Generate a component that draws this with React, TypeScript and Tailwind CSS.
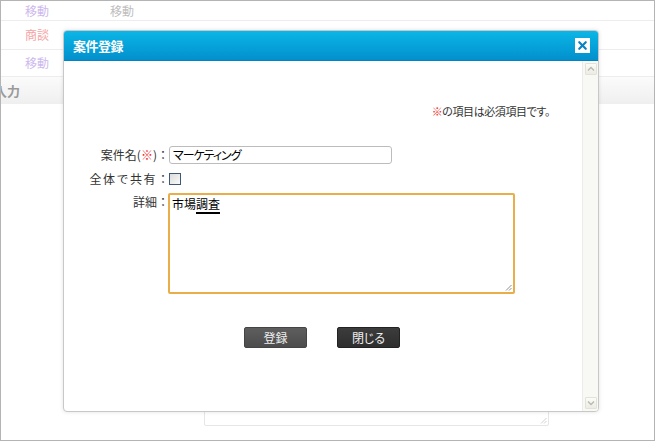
import { X } from 'lucide-react';

const jp = "font-['Noto_Sans_CJK_JP','Noto_Sans',sans-serif]";

function ScrollArrow({ up }: { up?: boolean }) {
  return (
    <div className="flex h-[12px] w-[12px] items-center justify-center rounded-[1px] border border-[#e2e2d8] bg-gradient-to-b from-[#fbfbf8] to-[#ecece4]">
      <svg width="8" height="6" viewBox="0 0 8 6">
        <path
          d={up ? 'M1 4.5 L4 1.5 L7 4.5' : 'M1 1.5 L4 4.5 L7 1.5'}
          fill="none"
          stroke="#b8b8b0"
          strokeWidth="1.3"
        />
      </svg>
    </div>
  );
}

function Grip({ color = '#a0a0a0' }: { color?: string }) {
  return (
    <svg className="absolute bottom-[1px] right-[1px]" width="7" height="7" viewBox="0 0 7 7">
      <path d="M6.5 1 L1 6.5 M6.5 4 L4 6.5" stroke={color} strokeWidth="1" />
    </svg>
  );
}

// labels use full-width glyphs (no palt) so the colon keeps its gap
const label = 'w-[105px] text-right leading-[16px] [font-feature-settings:normal]';

export default function App() {
  return (
    <div
      className={`relative h-[441px] w-[655px] overflow-hidden border border-[#b4b4b4] bg-white text-[12px] ${jp}`}
      style={{ fontFeatureSettings: '"palt"' }}
    >
      {/* page behind the dialog */}
      <div className="flex h-[20px] items-center border-b border-[#ededed]">
        <span className="ml-[24px] w-[85px] text-[#cdb8ee]">移動</span>
        <span className="text-[#bdbdbd]">移動</span>
      </div>
      <div className="flex h-[29px] items-center border-b border-[#ededed]">
        <span className="ml-[24px] w-[85px] text-[#f5a3a3]">商談</span>
      </div>
      <div className="flex h-[27px] items-center border-b border-[#ededed]">
        <span className="ml-[24px] w-[85px] text-[#cdb8ee]">移動</span>
      </div>
      <div className="flex h-[27px] items-center bg-gradient-to-b from-[#fbfbfb] to-[#efefef] text-[13px] font-bold text-[#9a9a9a]">
        <span className="ml-[-7px]">入力</span>
      </div>
      <div className="relative ml-[203px] mt-[290px] h-[32px] w-[345px] rounded-[2px] border border-[#e6e6e6]">
        <Grip color="#d0d0d0" />
      </div>

      {/* dialog */}
      <div className="absolute left-[62px] top-[29px] flex h-[382px] w-[536px] flex-col overflow-hidden rounded-[4px] border border-[#c8c8c8] bg-white shadow-[0_0_4px_rgba(0,0,0,0.12)]">
        <div className="flex h-[30px] shrink-0 items-center justify-between border-b border-[#0580c0] bg-gradient-to-b from-[#0cb6e6] to-[#0390cd] pl-[9px] pr-[8px]">
          <span className="text-[13px] font-bold tracking-[-0.5px] text-white">案件登録</span>
          <div className="flex h-[15px] w-[15px] items-center justify-center bg-white">
            <X className="h-[13px] w-[13px] text-[#0a82c4]" strokeWidth={4} />
          </div>
        </div>
        <div className="flex flex-1">
          <div className="flex-1 text-[#333]">
            <div className="mr-[32px] mt-[42px] text-right text-[11px] leading-[16px] tracking-[-0.4px]">
              <span className="text-[#f03030]">※</span>の項目は必須項目です。
            </div>
            <div className="mt-[27px] flex items-center">
              <div className={label}>
                案件名(<span className="text-[#f03030]">※</span>)：
              </div>
              <div className="flex h-[18px] w-[223px] items-center rounded-[3px] border border-[#bcbcbc] pl-[3px] tracking-[-1px] text-black">
                マーケティング
              </div>
            </div>
            <div className="mt-[7px] flex h-[16px] items-center">
              <div className={label}>
                <span className="tracking-[1.5px]">全体で共有</span>：
              </div>
              <div className="h-[12px] w-[12px] border border-[#3c5a78] bg-gradient-to-br from-[#dcdcdc] to-[#fafafa]" />
            </div>
            <div className="mt-[6px] flex">
              <div className={`${label} pt-[1px]`}>詳細：</div>
              <div className="relative ml-[-1px] h-[101px] w-[347px] rounded-[2px] border-2 border-[#e9ad4a] px-[2px] pt-[1px] leading-[16px] text-black">
                市場<span className="border-b-2 border-black">調査</span>
                <Grip color="#909090" />
              </div>
            </div>
            <div className="mt-[33px] flex justify-center gap-[30px] pr-[2px]">
              <button className="flex h-[21px] w-[63px] items-center justify-center rounded-[2px] border border-[#444] bg-gradient-to-b from-[#5e5e5e] to-[#4c4c4c] text-[12px] text-[#eee]">
                登録
              </button>
              <button className="flex h-[21px] w-[63px] items-center justify-center rounded-[2px] border border-[#222] bg-gradient-to-b from-[#3c3c3c] to-[#2e2e2e] text-[12px] text-[#eee]">
                閉じる
              </button>
            </div>
          </div>
          <div className="flex w-[16px] flex-col items-center justify-between border-l border-[#ececec] bg-[#f8f8f4] py-[2px]">
            <ScrollArrow up />
            <ScrollArrow />
          </div>
        </div>
      </div>
    </div>
  );
}
